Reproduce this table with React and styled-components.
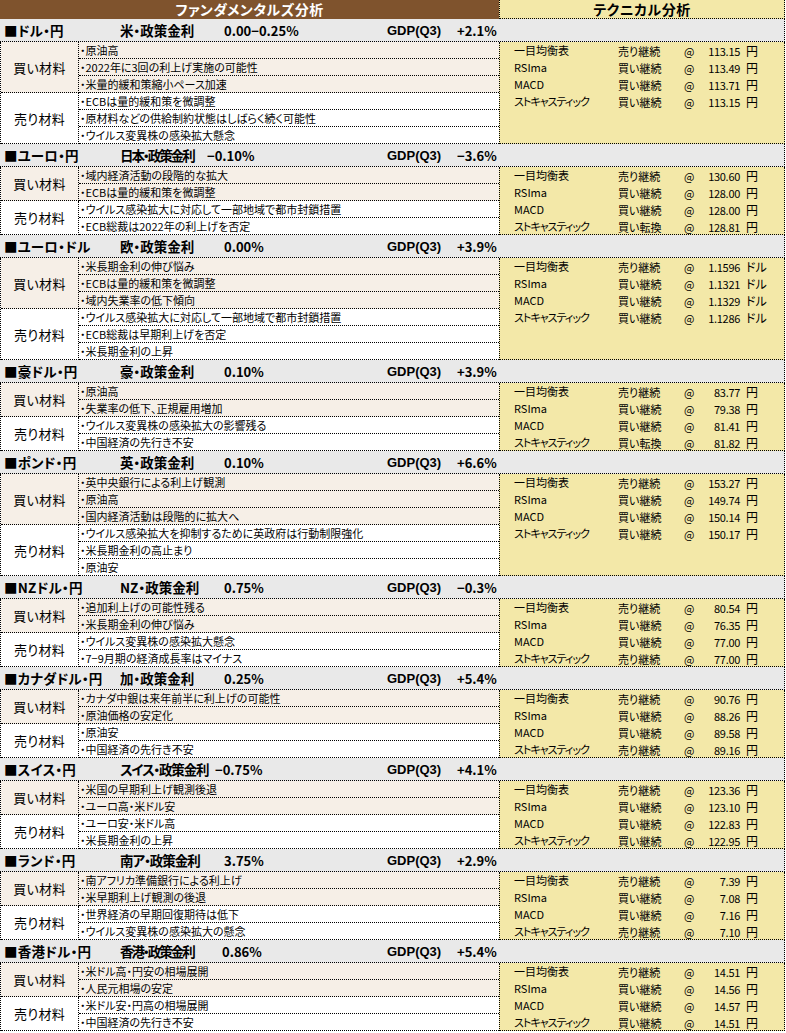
import React from "react";
import styled, { createGlobalStyle } from "styled-components";

const GlobalStyle = createGlobalStyle`
  html, body { margin: 0; padding: 0; background: #ffffff; }
  body {
    font-family: "Noto Sans CJK JP", "Noto Sans", sans-serif;
    color: #000;
    font-feature-settings: "palt";
  }
`;

const C = {
  brown: "#7f532d",
  yellow: "#f3e8a8",
  gray: "#e9e9e9",
  buy: "#f6efe7",
  sell: "#ffffff",
  line: "1px dotted #000",
};

const ROW = 17;
const TECH_NAMES = ["一目均衡表", "RSIma", "MACD", "ストキャスティック"];

const sections = [
  {
    pair: "■ドル・円", policy: "米・政策金利", rate: "0.00−0.25%", rateAt: 104, track: 0, gdp: "+2.1%", unit: "円",
    buy: ["原油高", "2022年に3回の利上げ実施の可能性", "米量的緩和策縮小ペース加速"],
    sell: ["ECBは量的緩和策を微調整", "原材料などの供給制約状態はしばらく続く可能性", "ウイルス変異株の感染拡大懸念"],
    tech: [["売り継続", "113.15"], ["買い継続", "113.49"], ["買い継続", "113.71"], ["買い継続", "113.15"]],
  },
  {
    pair: "■ユーロ・円", policy: "日本・政策金利", rate: "−0.10%", rateAt: 87, track: -2, gdp: "−3.6%", unit: "円",
    buy: ["域内経済活動の段階的な拡大", "ECBは量的緩和策を微調整"],
    sell: ["ウイルス感染拡大に対応して一部地域で都市封鎖措置", "ECB総裁は2022年の利上げを否定"],
    tech: [["売り継続", "130.60"], ["買い継続", "128.00"], ["買い継続", "128.00"], ["買い転換", "128.81"]],
  },
  {
    pair: "■ユーロ・ドル", policy: "欧・政策金利", rate: "0.00%", rateAt: 104, track: 0, gdp: "+3.9%", unit: "ドル",
    buy: ["米長期金利の伸び悩み", "ECBは量的緩和策を微調整", "域内失業率の低下傾向"],
    sell: ["ウイルス感染拡大に対応して一部地域で都市封鎖措置", "ECB総裁は早期利上げを否定", "米長期金利の上昇"],
    tech: [["売り継続", "1.1596"], ["買い継続", "1.1321"], ["買い継続", "1.1329"], ["買い継続", "1.1286"]],
  },
  {
    pair: "■豪ドル・円", policy: "豪・政策金利", rate: "0.10%", rateAt: 104, track: 0, gdp: "+3.9%", unit: "円",
    buy: ["原油高", "失業率の低下、正規雇用増加"],
    sell: ["ウイルス変異株の感染拡大の影響残る", "中国経済の先行き不安"],
    tech: [["売り継続", "83.77"], ["買い継続", "79.38"], ["買い継続", "81.41"], ["買い転換", "81.82"]],
  },
  {
    pair: "■ポンド・円", policy: "英・政策金利", rate: "0.10%", rateAt: 104, track: 0, gdp: "+6.6%", unit: "円",
    buy: ["英中央銀行による利上げ観測", "原油高", "国内経済活動は段階的に拡大へ"],
    sell: ["ウイルス感染拡大を抑制するために英政府は行動制限強化", "米長期金利の高止まり", "原油安"],
    tech: [["売り継続", "153.27"], ["買い継続", "149.74"], ["買い継続", "150.14"], ["買い継続", "150.17"]],
  },
  {
    pair: "■NZドル・円", policy: "NZ・政策金利", rate: "0.75%", rateAt: 104, track: 0, gdp: "−0.3%", unit: "円",
    buy: ["追加利上げの可能性残る", "米長期金利の伸び悩み"],
    sell: ["ウイルス変異株の感染拡大懸念", "7−9月期の経済成長率はマイナス"],
    tech: [["売り継続", "80.54"], ["買い継続", "76.35"], ["買い継続", "77.00"], ["売り継続", "77.00"]],
  },
  {
    pair: "■カナダドル・円", policy: "加・政策金利", rate: "0.25%", rateAt: 104, track: 0, gdp: "+5.4%", unit: "円",
    buy: ["カナダ中銀は来年前半に利上げの可能性", "原油価格の安定化"],
    sell: ["原油安", "中国経済の先行き不安"],
    tech: [["売り継続", "90.76"], ["買い継続", "88.26"], ["買い継続", "89.58"], ["売り継続", "89.16"]],
  },
  {
    pair: "■スイス・円", policy: "スイス・政策金利", rate: "−0.75%", rateAt: 95, track: -1.2, gdp: "+4.1%", unit: "円",
    buy: ["米国の早期利上げ観測後退", "ユーロ高・米ドル安"],
    sell: ["ユーロ安・米ドル高", "米長期金利の上昇"],
    tech: [["売り継続", "123.36"], ["買い継続", "123.10"], ["買い継続", "122.83"], ["買い継続", "122.95"]],
  },
  {
    pair: "■ランド・円", policy: "南ア・政策金利", rate: "3.75%", rateAt: 104, track: -1, gdp: "+2.9%", unit: "円",
    buy: ["南アフリカ準備銀行による利上げ", "米早期利上げ観測の後退"],
    sell: ["世界経済の早期回復期待は低下", "ウイルス変異株の感染拡大の懸念"],
    tech: [["売り継続", "7.39"], ["買い継続", "7.08"], ["買い継続", "7.16"], ["売り継続", "7.10"]],
  },
  {
    pair: "■香港ドル・円", policy: "香港・政策金利", rate: "0.86%", rateAt: 102, track: -2, gdp: "+5.4%", unit: "円",
    buy: ["米ドル高・円安の相場展開", "人民元相場の安定"],
    sell: ["米ドル安・円高の相場展開", "中国経済の先行き不安"],
    tech: [["売り継続", "14.51"], ["買い継続", "14.56"], ["買い継続", "14.57"], ["買い継続", "14.51"]],
  },
];

const Sheet = styled.div`
  width: 785px;
  display: flex;
  flex-direction: column;
`;

const TitleBar = styled.div`
  display: grid;
  grid-template-columns: 499px 1fr;
  height: 19px;
`;

const FundTitle = styled.div`
  background: ${C.brown};
  color: #fff;
  font-weight: 700;
  font-size: 14px;
  line-height: 19px;
  text-align: center;
  letter-spacing: 0.5px;
`;

const TechTitle = styled.div`
  background: ${C.yellow};
  border-left: ${C.line};
  border-right: ${C.line};
  border-bottom: ${C.line};
  box-sizing: border-box;
  font-weight: 700;
  font-size: 14px;
  line-height: 18px;
  text-align: center;
  letter-spacing: 0.5px;
`;

const SectionHead = styled.div`
  display: grid;
  grid-template-columns: 116px 267px 70px 1fr;
  align-items: center;
  height: 23px;
  box-sizing: border-box;
  padding-left: 4px;
  background: ${C.gray};
  border-bottom: ${C.line};
  border-right: ${C.line};
  font-weight: 700;
  font-size: 13.5px;
  white-space: nowrap;
`;

const Pair = styled.span`
  letter-spacing: 0.2px;
`;

const Policy = styled.div`
  display: flex;
  align-items: center;
`;

const PolicyLabel = styled.span`
  width: ${(p) => p.$w}px;
  flex: none;
  letter-spacing: ${(p) => p.$track}px;
`;

const Rate = styled.span`
  font-size: 13px;
`;

const GdpLabel = styled.span`
  font-size: 13px;
  font-family: "Liberation Sans", "Noto Sans CJK JP", sans-serif;
`;

const GdpValue = styled.span`
  font-size: 13px;
`;

const Body = styled.div`
  display: grid;
  grid-template-columns: 499px 1fr;
  grid-template-rows: ${(p) => p.$rows * ROW}px;
`;

const Groups = styled.div`
  display: flex;
  flex-direction: column;
  border-left: ${C.line};
`;

const Group = styled.div`
  display: grid;
  grid-template-columns: 78px 1fr;
  background: ${(p) => (p.$tone === "buy" ? C.buy : C.sell)};
`;

const GroupLabel = styled.div`
  display: flex;
  align-items: center;
  justify-content: center;
  border-right: ${C.line};
  border-bottom: ${C.line};
  font-size: 13px;
  letter-spacing: 0.3px;
`;

const Items = styled.div`
  display: flex;
  flex-direction: column;
`;

const Item = styled.div`
  height: ${ROW}px;
  box-sizing: border-box;
  border-bottom: ${C.line};
  font-size: 11px;
  line-height: 16px;
  padding-left: 1px;
  white-space: nowrap;
  letter-spacing: 0;
`;

const TechPanel = styled.div`
  background: ${C.yellow};
  border-left: ${C.line};
  border-right: ${C.line};
  border-bottom: ${C.line};
  box-sizing: border-box;
  display: flex;
  flex-direction: column;
  overflow: hidden;
`;

const TechRow = styled.div`
  display: grid;
  grid-template-columns: 104px 66px 16px 40px auto;
  flex: none;
  height: ${ROW}px;
  padding-left: 14px;
  font-size: 11px;
  line-height: 18px;
  white-space: nowrap;
`;

const TechName = styled.span`
  line-height: 17px;
  letter-spacing: ${(p) => (p.$kana ? "-1px" : "0")};
`;

const Signal = styled.span``;

const At = styled.span``;

const Price = styled.span`
  text-align: right;
  letter-spacing: -0.3px;
`;

const Unit = styled.span`
  padding-left: 6px;
  font-size: 12px;
`;

function Section({ s }) {
  const rows = s.buy.length + s.sell.length;
  return (
    <>
      <SectionHead>
        <Pair>{s.pair}</Pair>
        <Policy>
          <PolicyLabel $w={s.rateAt} $track={s.track}>{s.policy}</PolicyLabel>
          <Rate>{s.rate}</Rate>
        </Policy>
        <GdpLabel>GDP(Q3)</GdpLabel>
        <GdpValue>{s.gdp}</GdpValue>
      </SectionHead>
      <Body $rows={rows}>
        <Groups>
          <Group $tone="buy">
            <GroupLabel>買い材料</GroupLabel>
            <Items>
              {s.buy.map((t, i) => (
                <Item key={i}>・{t}</Item>
              ))}
            </Items>
          </Group>
          <Group $tone="sell">
            <GroupLabel>売り材料</GroupLabel>
            <Items>
              {s.sell.map((t, i) => (
                <Item key={i}>・{t}</Item>
              ))}
            </Items>
          </Group>
        </Groups>
        <TechPanel>
          {s.tech.map(([sig, val], i) => (
            <TechRow key={i}>
              <TechName $kana={i === 3}>{TECH_NAMES[i]}</TechName>
              <Signal>{sig}</Signal>
              <At>@</At>
              <Price>{val}</Price>
              <Unit>{s.unit}</Unit>
            </TechRow>
          ))}
        </TechPanel>
      </Body>
    </>
  );
}

export default function App() {
  return (
    <>
      <GlobalStyle />
      <Sheet>
        <TitleBar>
          <FundTitle>ファンダメンタルズ分析</FundTitle>
          <TechTitle>テクニカル分析</TechTitle>
        </TitleBar>
        {sections.map((s, i) => (
          <Section key={i} s={s} />
        ))}
      </Sheet>
    </>
  );
}
